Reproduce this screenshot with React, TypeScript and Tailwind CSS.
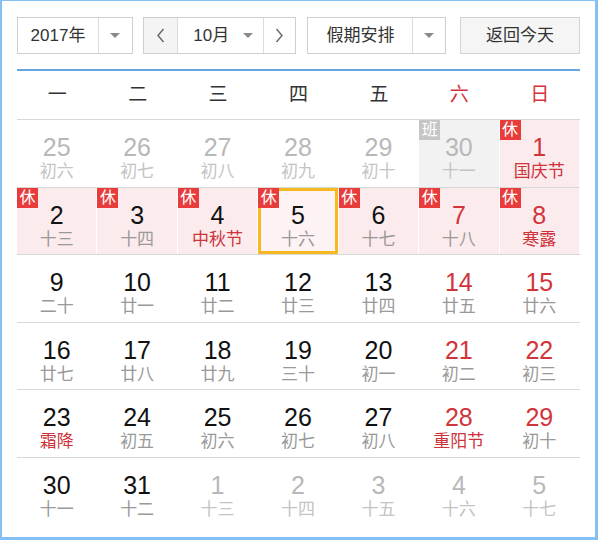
import React from "react";

type Day = {
  n: number;
  lunar: string;
  out?: boolean;
  red?: boolean;
  fest?: boolean;
  tag?: "休" | "班";
  sel?: boolean;
};

const weeks: Day[][] = [
  [
    { n: 25, lunar: "初六", out: true },
    { n: 26, lunar: "初七", out: true },
    { n: 27, lunar: "初八", out: true },
    { n: 28, lunar: "初九", out: true },
    { n: 29, lunar: "初十", out: true },
    { n: 30, lunar: "十一", out: true, tag: "班" },
    { n: 1, lunar: "国庆节", red: true, fest: true, tag: "休" },
  ],
  [
    { n: 2, lunar: "十三", tag: "休" },
    { n: 3, lunar: "十四", tag: "休" },
    { n: 4, lunar: "中秋节", fest: true, tag: "休" },
    { n: 5, lunar: "十六", tag: "休", sel: true },
    { n: 6, lunar: "十七", tag: "休" },
    { n: 7, lunar: "十八", red: true, tag: "休" },
    { n: 8, lunar: "寒露", red: true, fest: true, tag: "休" },
  ],
  [
    { n: 9, lunar: "二十" },
    { n: 10, lunar: "廿一" },
    { n: 11, lunar: "廿二" },
    { n: 12, lunar: "廿三" },
    { n: 13, lunar: "廿四" },
    { n: 14, lunar: "廿五", red: true },
    { n: 15, lunar: "廿六", red: true },
  ],
  [
    { n: 16, lunar: "廿七" },
    { n: 17, lunar: "廿八" },
    { n: 18, lunar: "廿九" },
    { n: 19, lunar: "三十" },
    { n: 20, lunar: "初一" },
    { n: 21, lunar: "初二", red: true },
    { n: 22, lunar: "初三", red: true },
  ],
  [
    { n: 23, lunar: "霜降", fest: true },
    { n: 24, lunar: "初五" },
    { n: 25, lunar: "初六" },
    { n: 26, lunar: "初七" },
    { n: 27, lunar: "初八" },
    { n: 28, lunar: "重阳节", red: true, fest: true },
    { n: 29, lunar: "初十", red: true },
  ],
  [
    { n: 30, lunar: "十一" },
    { n: 31, lunar: "十二" },
    { n: 1, lunar: "十三", out: true },
    { n: 2, lunar: "十四", out: true },
    { n: 3, lunar: "十五", out: true },
    { n: 4, lunar: "十六", out: true },
    { n: 5, lunar: "十七", out: true },
  ],
];

const weekNames = ["一", "二", "三", "四", "五", "六", "日"];

const Caret = () => (
  <svg width="10" height="6" viewBox="0 0 10 6" className="block">
    <path d="M0 0 L10 0 L5 5 Z" fill="#8a8a8a" />
  </svg>
);

const Chevron = ({ dir }: { dir: "l" | "r" }) => (
  <svg width="9" height="15" viewBox="0 0 9 15" className="block">
    <path
      d={dir === "l" ? "M7.5 1 L2 7.5 L7.5 14" : "M1.5 1 L7 7.5 L1.5 14"}
      fill="none"
      stroke="#666"
      strokeWidth="1.4"
    />
  </svg>
);

const DayCell = ({ d }: { d: Day }) => {
  const bg = d.sel
    ? "bg-[#fdf3f4] border-[3px] border-[#f6b922]"
    : d.tag === "休"
    ? "bg-[#fcebed]"
    : d.tag === "班"
    ? "bg-[#f2f2f2]"
    : "";

  const numColor = d.out
    ? "text-[#b8b8b8]"
    : d.red
    ? "text-[#d2343c]"
    : "text-[#111]";

  const lunarColor = d.out
    ? "text-[#c4c4c4]"
    : d.fest
    ? "text-[#cc333b]"
    : "text-[#999]";

  return (
    <div className="h-full pr-px">
      <div className={`relative flex h-full flex-col items-center ${bg}`}>
        {d.tag && (
          <span
            className={`absolute flex h-[20px] w-[21px] items-center justify-center text-[16px] leading-none text-white ${
              d.tag === "休" ? "bg-[#e83c3c]" : "bg-[#c6c6c6]"
            } ${d.sel ? "-left-[3px] -top-[3px]" : "left-0 top-0"}`}
          >
            {d.tag}
          </span>
        )}
        <div
          className={`${d.sel ? "mt-[11px]" : "mt-[14px]"} text-[25px] leading-[26px] ${numColor}`}
        >
          {d.n}
        </div>
        <div className={`mt-[2px] text-[17px] leading-[20px] ${lunarColor}`}>
          {d.lunar}
        </div>
      </div>
    </div>
  );
};

export default function App() {
  return (
    <div className="h-[540px] w-[598px] border-b-[3px] border-l-2 border-r-[3px] border-t border-[#86bff2] bg-white pl-[15px] pt-[16px] font-['Liberation_Sans','Noto_Sans_CJK_SC',sans-serif]">
      <div className="w-[563px]">
        {/* toolbar */}
        <div className="flex h-[37px] items-stretch text-[17px] text-[#333]">
          <div className="flex w-[116px] border border-[#cfcfcf]">
            <div className="flex w-[80px] items-center justify-center">2017年</div>
            <div className="flex flex-1 items-center justify-center border-l border-[#dcdcdc]">
              <Caret />
            </div>
          </div>

          <div className="ml-[10px] flex w-[154px] border border-[#cfcfcf]">
            <div className="flex w-[33px] items-center justify-center bg-[#f4f4f4]">
              <Chevron dir="l" />
            </div>
            <div className="flex w-[87px] items-center justify-center gap-[14px] border-x border-[#dcdcdc] pl-[6px]">
              <span>10月</span>
              <Caret />
            </div>
            <div className="flex flex-1 items-center justify-center">
              <Chevron dir="r" />
            </div>
          </div>

          <div className="ml-[11px] flex w-[139px] border border-[#cfcfcf]">
            <div className="flex w-[104px] items-center justify-center">假期安排</div>
            <div className="flex flex-1 items-center justify-center border-l border-[#dcdcdc]">
              <Caret />
            </div>
          </div>

          <div className="ml-[14px] flex w-[120px] items-center justify-center border border-[#d4d4d4] bg-[#f5f5f5]">
            返回今天
          </div>
        </div>

        <div className="mt-[15px] h-[2px] bg-[#68a6e2]" />

        {/* week header */}
        <div className="grid h-[49px] grid-cols-7 border-b border-[#d8d8d8] text-[19px]">
          {weekNames.map((w, i) => (
            <div
              key={w}
              className={`flex items-center justify-center ${
                i >= 5 ? "text-[#d2343c]" : "text-[#333]"
              }`}
            >
              {w}
            </div>
          ))}
        </div>

        {/* days */}
        {weeks.map((week, r) => (
          <div
            key={r}
            className={`grid h-[67.5px] grid-cols-7 ${
              r < weeks.length - 1 ? "border-b border-[#d8d8d8]" : ""
            }`}
          >
            {week.map((d, c) => (
              <DayCell key={c} d={d} />
            ))}
          </div>
        ))}
      </div>
    </div>
  );
}
